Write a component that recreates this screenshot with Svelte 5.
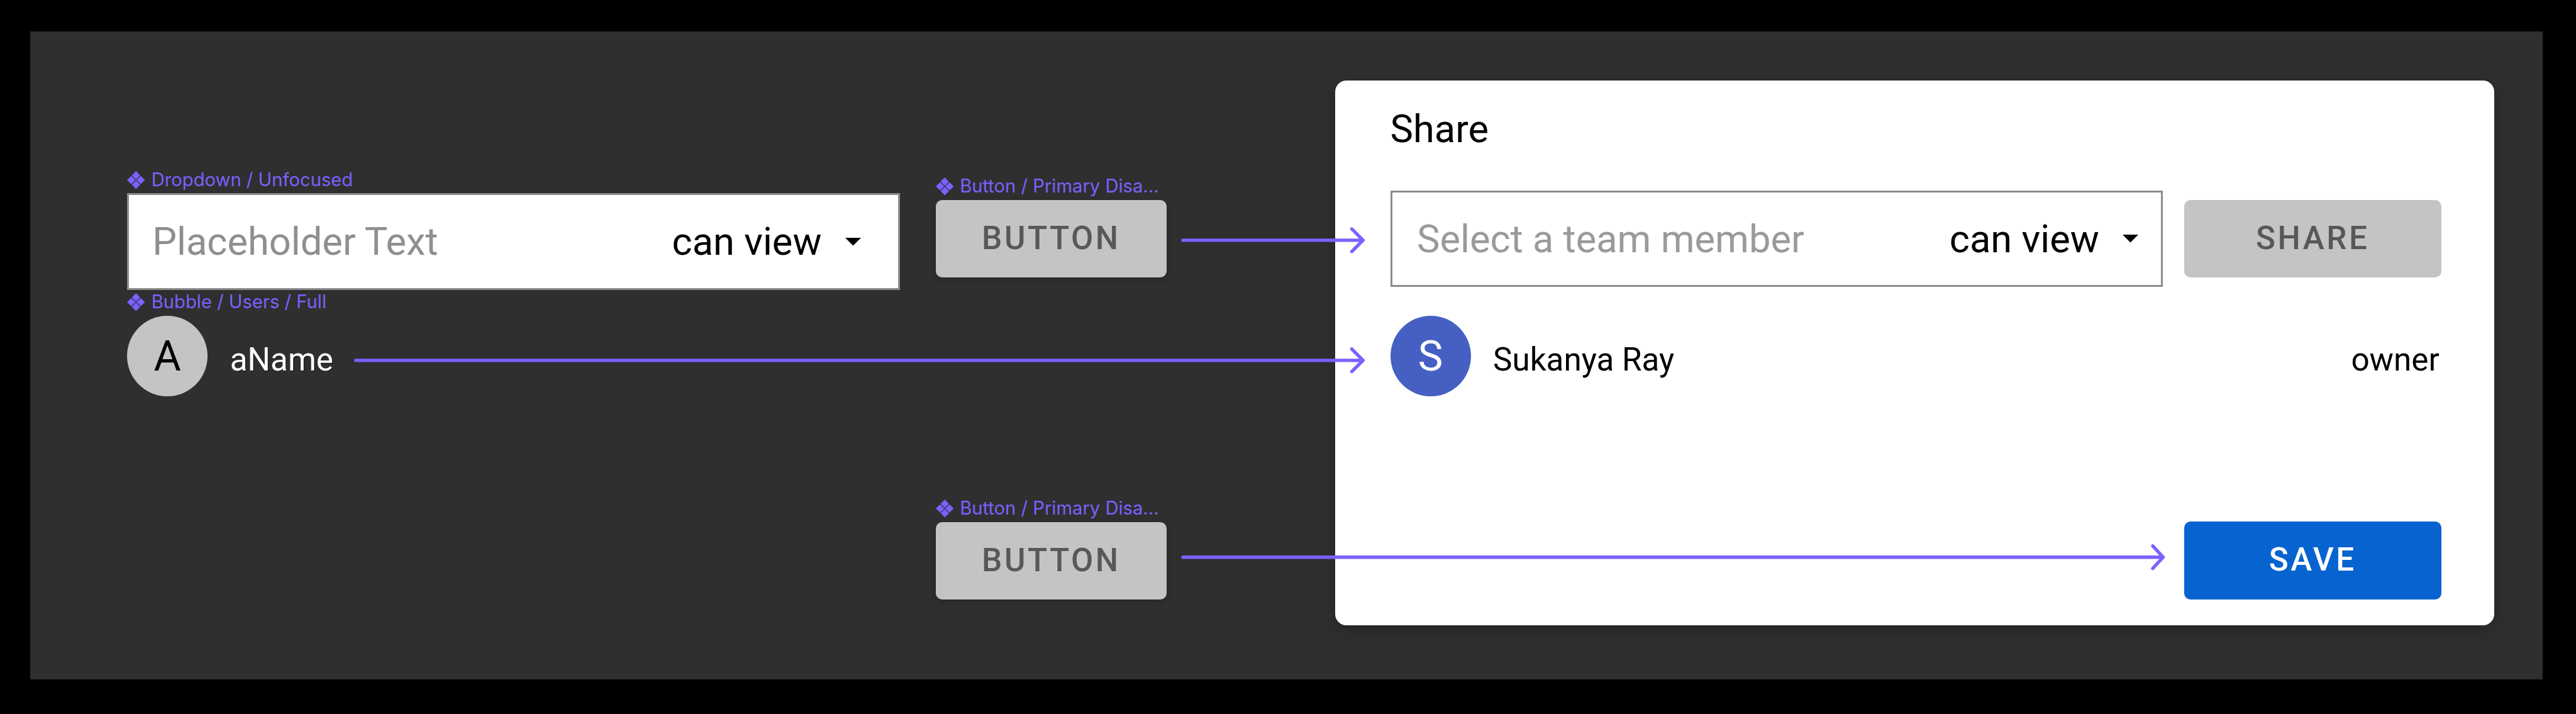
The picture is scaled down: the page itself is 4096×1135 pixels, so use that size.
<script>
  const permission = "can view";
</script>

{#snippet tag(label)}
  <div class="tag">
    <svg class="tag-icon" viewBox="0 0 16 16">
      <path d="M8 0 L11.7 3.8 L8 7.6 L4.3 3.8 Z" />
      <path d="M3.8 4.3 L7.6 8 L3.8 11.7 L0 8 Z" />
      <path d="M12.2 4.3 L16 8 L12.2 11.7 L8.4 8 Z" />
      <path d="M8 8.4 L11.7 12.2 L8 16 L4.3 12.2 Z" />
    </svg>
    <span>{label}</span>
  </div>
{/snippet}

{#snippet caret()}
  <svg class="caret" viewBox="0 0 10 5"><path d="M0 0 H10 L5 5 Z" /></svg>
{/snippet}

<div class="page">
  <main class="canvas">
    <section class="col-left">
      {@render tag("Dropdown / Unfocused")}
      <div class="dropdown wide">
        <span class="placeholder">Placeholder Text</span>
        <span class="value">{permission}</span>
        {@render caret()}
      </div>
      <div class="bubble-tag">{@render tag("Bubble / Users / Full")}</div>
      <div class="user">
        <div class="bubble grey">A</div>
        <span class="name light">aName</span>
      </div>
    </section>

    <section class="col-buttons">
      {@render tag("Button / Primary Disa...")}
      <button class="btn disabled shadow">BUTTON</button>
      <div class="second-tag">{@render tag("Button / Primary Disa...")}</div>
      <button class="btn disabled shadow">BUTTON</button>
    </section>

    <section class="dialog">
      <h2 class="title">Share</h2>
      <div class="share-row">
        <div class="dropdown">
          <span class="placeholder soft">Select a team member</span>
          <span class="value">{permission}</span>
          {@render caret()}
        </div>
        <button class="btn disabled action">SHARE</button>
      </div>
      <div class="user member">
        <div class="bubble blue">S</div>
        <span class="name">Sukanya Ray</span>
        <span class="role">owner</span>
      </div>
      <div class="footer">
        <button class="btn primary action">SAVE</button>
      </div>
    </section>
  </main>

  <svg class="arrows" viewBox="0 0 6176 1712">
    <path d="M2836 576 H3268 M3241 549 L3268 576 L3241 603" />
    <path d="M852 864 H3268 M3241 837 L3268 864 L3241 891" />
    <path d="M2836 1336 H5187 M5162 1309 L5187 1336 L5162 1363" />
  </svg>
</div>

<style>
  :global(body) {
    background: #000;
  }

  .page {
    position: relative;
    width: 4096px;
    height: 1135px;
    padding: 50.4px 53.4px 55.3px 47.75px;
    box-sizing: border-box;
    overflow: hidden;
    font-family: Roboto, sans-serif;
  }

  .canvas {
    display: flex;
    align-items: flex-start;
    height: 100%;
    padding-left: 154.5px;
    background: #2f2f2f;
  }

  .col-left {
    width: 1229px;
    padding-top: 218.4px;
    flex: none;
  }

  .col-buttons {
    width: 367.4px;
    margin-left: 56.4px;
    padding-top: 229px;
    flex: none;
  }

  .second-tag {
    margin-top: 350px;
  }

  .bubble-tag {
    margin-top: 2.4px;
  }

  .tag {
    display: flex;
    align-items: center;
    gap: 10px;
    height: 34px;
    margin-bottom: 4.6px;
    font-family: Inter, sans-serif;
    font-size: 29.2px;
    line-height: 34px;
    color: #7b61ff;
    white-space: nowrap;
  }

  .tag-icon {
    width: 28.5px;
    height: 28.5px;
    fill: #7b61ff;
    flex: none;
  }

  .dropdown {
    display: flex;
    align-items: center;
    width: 1228.3px;
    height: 153.5px;
    padding: 0 36px 0 39.5px;
    box-sizing: border-box;
    background: #fff;
    border: 3px solid #8c8c8c;
    font-size: 61.4px;
  }

  .dropdown.wide {
    padding-left: 37px;
    padding-right: 59px;
  }

  .placeholder {
    margin-right: auto;
    color: #8f8f8f;
  }

  .placeholder.soft {
    color: #9a9a9a;
  }

  .value {
    color: #000;
  }

  .caret {
    width: 25px;
    height: 12.5px;
    margin-left: 37px;
    fill: #000;
    flex: none;
  }

  .user {
    display: flex;
    align-items: center;
  }

  .bubble {
    display: flex;
    align-items: center;
    justify-content: center;
    width: 128px;
    height: 128px;
    border-radius: 50%;
    font-size: 66.5px;
    flex: none;
  }

  .bubble.grey {
    background: #c4c4c4;
    color: #000;
  }

  .bubble.blue {
    background: #4560c2;
    color: #fff;
  }

  .name {
    margin: 11px 0 0 35.5px;
    font-size: 51.2px;
    color: #000;
  }

  .name.light {
    color: #fff;
    text-shadow: 1px 1px 1px rgba(0, 0, 0, 0.7);
  }

  .btn {
    display: block;
    width: 100%;
    height: 123.4px;
    padding: 0 0 3px;
    border: none;
    border-radius: 10px;
    font-family: Roboto, sans-serif;
    font-size: 51.2px;
    font-weight: 500;
    letter-spacing: 3.5px;
  }

  .btn.disabled {
    background: #c4c4c4;
    color: #585858;
  }

  .btn.primary {
    background: #0763cf;
    color: #fff;
  }

  .btn.shadow {
    box-shadow: 0 4px 10px rgba(0, 0, 0, 0.18);
  }

  .dialog {
    display: flex;
    flex-direction: column;
    width: 1843px;
    height: 866.2px;
    margin: 77.4px 0 0 268px;
    padding: 41.2px 84.2px 41.1px 87.5px;
    box-sizing: border-box;
    background: #fff;
    border-radius: 18px;
    box-shadow: 0 8px 28px rgba(0, 0, 0, 0.22);
    flex: none;
  }

  .title {
    margin: 0 0 61.9px;
    font-size: 61.4px;
    font-weight: 400;
    color: #000;
  }

  .share-row {
    display: flex;
    align-items: center;
    gap: 33.8px;
  }

  .action {
    width: 409.2px;
    flex: none;
  }

  .member {
    margin-top: 45.9px;
  }

  .role {
    margin: 11px 0 0 auto;
    padding-right: 3px;
    font-size: 51.2px;
    color: #000;
  }

  .footer {
    display: flex;
    justify-content: flex-end;
    margin-top: auto;
  }

  .arrows {
    position: absolute;
    top: 0;
    left: 0;
    width: 4096px;
    height: 1135px;
    fill: none;
    stroke: #7b61ff;
    stroke-width: 8;
    stroke-linecap: round;
    stroke-linejoin: round;
    pointer-events: none;
  }
</style>
